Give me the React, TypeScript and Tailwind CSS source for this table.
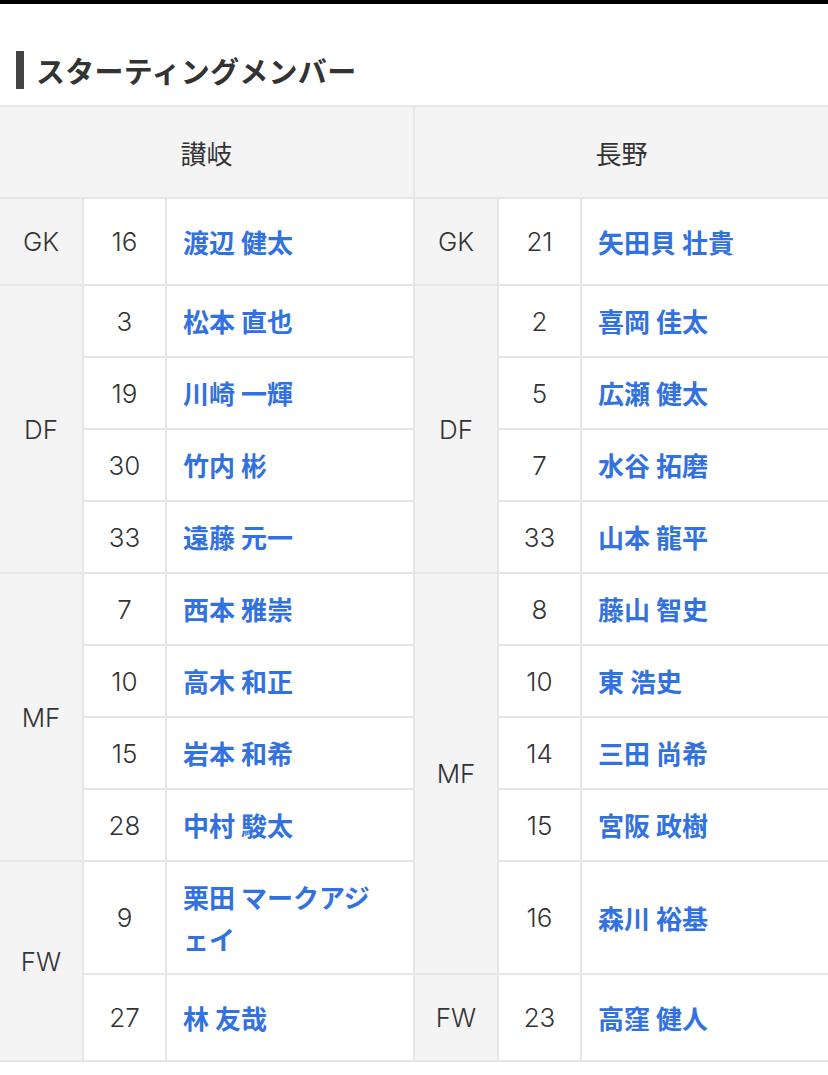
type Player = { num: string; name: string };
type Group = { pos: string; span: string; players: Player[] };

const sanuki: Group[] = [
  { pos: "GK", span: "row-span-1", players: [{ num: "16", name: "渡辺 健太" }] },
  {
    pos: "DF",
    span: "row-span-4",
    players: [
      { num: "3", name: "松本 直也" },
      { num: "19", name: "川崎 一輝" },
      { num: "30", name: "竹内 彬" },
      { num: "33", name: "遠藤 元一" },
    ],
  },
  {
    pos: "MF",
    span: "row-span-4",
    players: [
      { num: "7", name: "西本 雅崇" },
      { num: "10", name: "高木 和正" },
      { num: "15", name: "岩本 和希" },
      { num: "28", name: "中村 駿太" },
    ],
  },
  {
    pos: "FW",
    span: "row-span-2",
    players: [
      { num: "9", name: "栗田 マークアジェイ" },
      { num: "27", name: "林 友哉" },
    ],
  },
];

const nagano: Group[] = [
  { pos: "GK", span: "row-span-1", players: [{ num: "21", name: "矢田貝 壮貴" }] },
  {
    pos: "DF",
    span: "row-span-4",
    players: [
      { num: "2", name: "喜岡 佳太" },
      { num: "5", name: "広瀬 健太" },
      { num: "7", name: "水谷 拓磨" },
      { num: "33", name: "山本 龍平" },
    ],
  },
  {
    pos: "MF",
    span: "row-span-5",
    players: [
      { num: "8", name: "藤山 智史" },
      { num: "10", name: "東 浩史" },
      { num: "14", name: "三田 尚希" },
      { num: "15", name: "宮阪 政樹" },
      { num: "16", name: "森川 裕基" },
    ],
  },
  { pos: "FW", span: "row-span-1", players: [{ num: "23", name: "高窪 健人" }] },
];

// flatten both teams into grid rows so both sides share row heights
function buildRows(team: Group[]) {
  const rows: { group?: Group; player: Player }[] = [];
  team.forEach((g) => g.players.forEach((p, i) => rows.push({ group: i === 0 ? g : undefined, player: p })));
  return rows;
}

const latin = "font-['Inter',sans-serif] font-light";

function Side({ row }: { row: { group?: Group; player: Player } }) {
  return (
    <>
      {row.group && (
        <div className={`${row.group.span} ${latin} bg-[#f4f4f4] flex items-center justify-center`}>
          {row.group.pos}
        </div>
      )}
      <div className={`${latin} bg-white flex items-center justify-center`}>{row.player.num}</div>
      <div className="bg-white flex items-center pl-4 pr-5 font-bold text-[#3171e0] leading-[1.6] [line-break:loose]">
        {row.player.name}
      </div>
    </>
  );
}

export default function App() {
  const left = buildRows(sanuki);
  const right = buildRows(nagano);

  return (
    <div
      className="min-h-screen bg-white text-[#333]"
      style={{ fontFamily: '"Noto Sans CJK JP", "Noto Sans", sans-serif' }}
    >
      <div className="h-1 bg-black" />

      <div className="flex items-center gap-[12px] px-4 pt-[47px] pb-4">
        <span className="w-2 h-[38px] bg-[#444]" />
        <h2 className="text-[29px] font-bold leading-none text-[#333] tracking-[0.01em]">スターティングメンバー</h2>
      </div>

      <div className="grid grid-cols-[82px_81px_246px_82px_81px_246px] grid-rows-[90px_85px_repeat(8,70px)_111px_85px] gap-[2px] py-[2px] bg-[#e6e6e6] text-[26px]">
        <div className="col-span-3 bg-[#f4f4f4] flex items-center justify-center">讃岐</div>
        <div className="col-span-3 bg-[#f4f4f4] flex items-center justify-center">長野</div>
        {left.map((row, i) => (
          <Side key={i} row={row} />
        )).flatMap((l, i) => [l, <Side key={`r${i}`} row={right[i]} />])}
      </div>
    </div>
  );
}
